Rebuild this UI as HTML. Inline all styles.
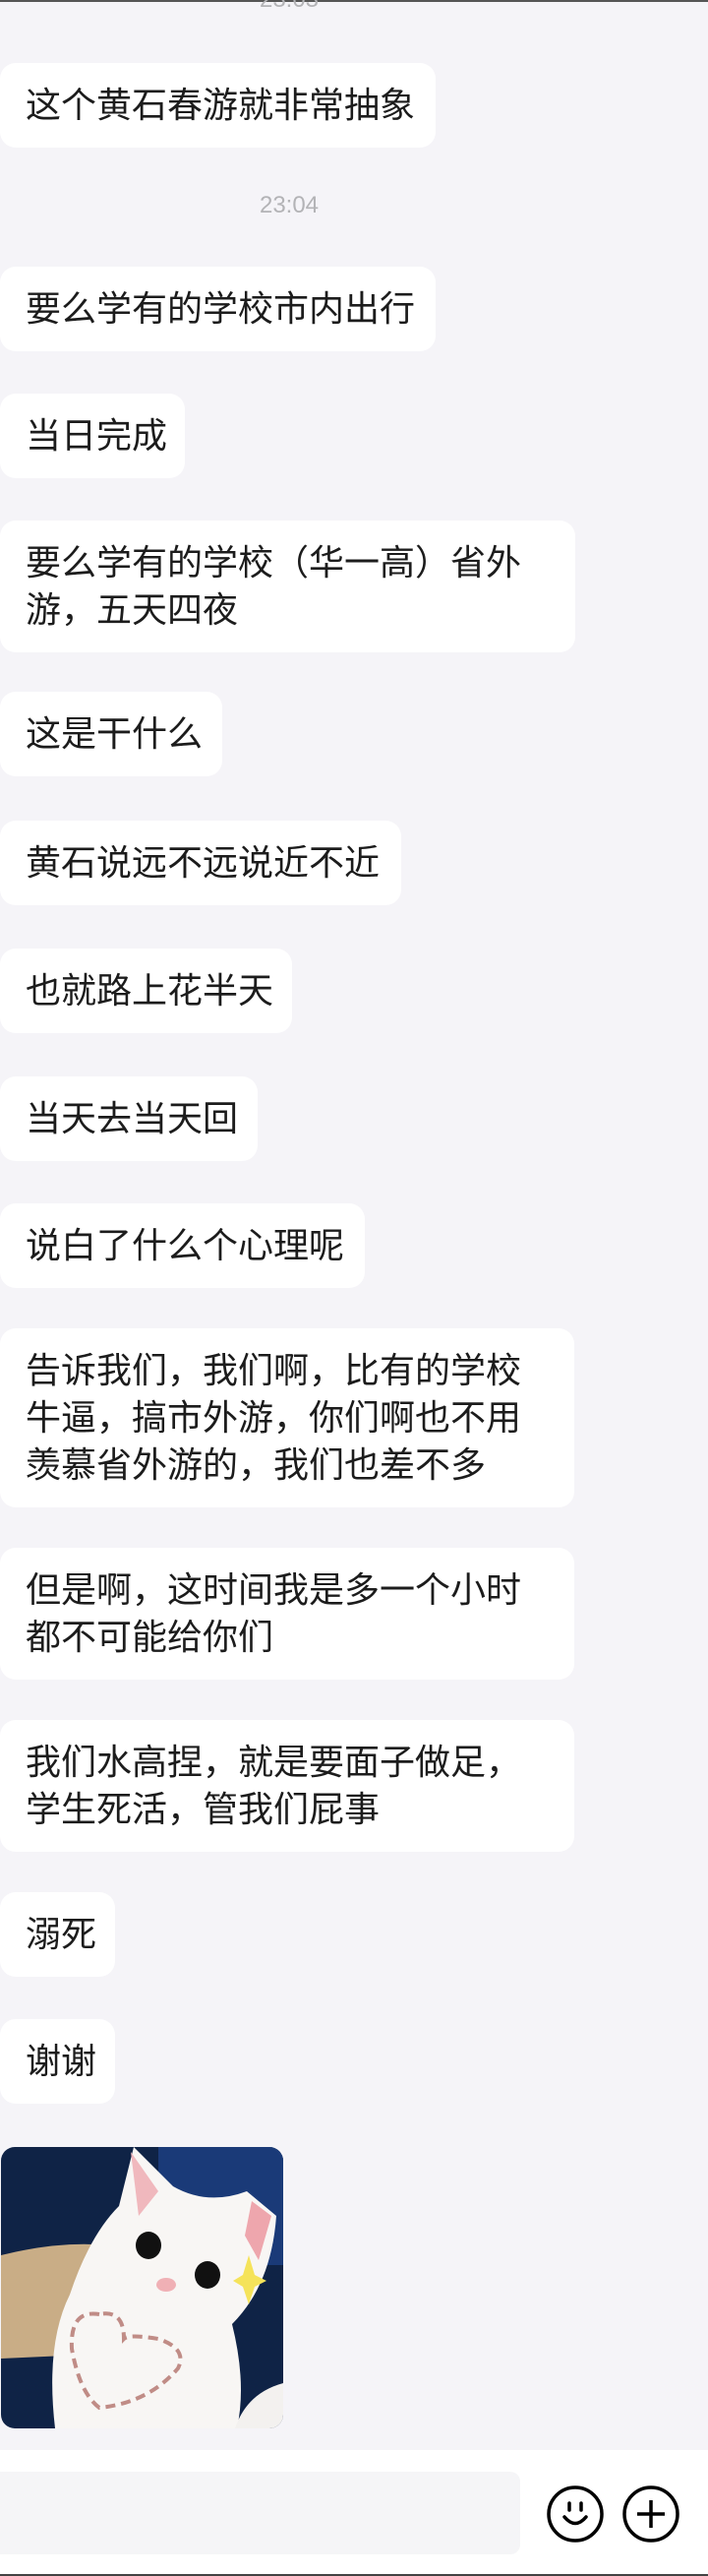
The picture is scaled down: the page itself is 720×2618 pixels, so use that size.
<!DOCTYPE html>
<html><head><meta charset="utf-8"><style>
*{margin:0;padding:0;box-sizing:border-box}
body{width:720px;height:2618px;background:#f5f4f8;position:relative;overflow:hidden;font-family:"Liberation Sans","Noto Sans CJK SC",sans-serif}
.b{position:absolute;left:0;background:#fff;border-radius:16px;color:#1c1c1c;font-size:36px;line-height:48px;padding:19px 22px 19px 26px;white-space:nowrap}
.t{position:absolute;left:0;width:588px;text-align:center;color:#b3b3b6;font-size:24px}
</style></head><body>
<div style="position:absolute;left:0;top:0;width:720px;height:2px;background:#555"></div>
<div class="t" style="top:-14px">23:03</div>
<div class="b" style="top:64px;width:443px">这个黄石春游就非常抽象</div>
<div class="t" style="top:195px">23:04</div>
<div class="b" style="top:271px;width:443px">要么学有的学校市内出行</div>
<div class="b" style="top:400px;width:188px">当日完成</div>
<div class="b" style="top:529px;width:585px">要么学有的学校（华一高）省外<br>游，五天四夜</div>
<div class="b" style="top:703px;width:226px">这是干什么</div>
<div class="b" style="top:834px;width:408px">黄石说远不远说近不近</div>
<div class="b" style="top:964px;width:297px">也就路上花半天</div>
<div class="b" style="top:1094px;width:262px">当天去当天回</div>
<div class="b" style="top:1223px;width:371px">说白了什么个心理呢</div>
<div class="b" style="top:1350px;width:584px">告诉我们，我们啊，比有的学校<br>牛逼，搞市外游，你们啊也不用<br>羡慕省外游的，我们也差不多</div>
<div class="b" style="top:1573px;width:584px">但是啊，这时间我是多一个小时<br>都不可能给你们</div>
<div class="b" style="top:1748px;width:584px">我们水高捏，就是要面子做足，<br>学生死活，管我们屁事</div>
<div class="b" style="top:1923px;width:117px">溺死</div>
<div class="b" style="top:2052px;width:117px">谢谢</div>
<svg style="position:absolute;left:1px;top:2182px" width="287" height="286" viewBox="0 0 287 286">
<defs><clipPath id="c"><rect width="287" height="286" rx="14"/></clipPath></defs>
<g clip-path="url(#c)">
<rect width="287" height="286" fill="#0f2346"/>
<rect x="160" y="0" width="127" height="120" fill="#1a3a78"/>
<path d="M0 110 Q60 95 110 100 L110 210 L0 215Z" fill="#c9ad86"/>
<path d="M55 286 Q45 200 70 150 Q90 90 120 60 L135 0 L175 40 Q210 60 250 45 L280 70 Q275 140 235 180 Q250 240 240 286Z" fill="#f8f6f4"/>
<path d="M238 286 Q250 250 287 240 L287 286Z" fill="#f3f1ef"/>
<path d="M132 5 L160 45 L140 70 Z" fill="#f0b8bd"/>
<path d="M255 55 L275 70 L262 115 L248 90Z" fill="#eea6ad"/>
<ellipse cx="150" cy="100" rx="13" ry="14" fill="#111"/>
<ellipse cx="210" cy="130" rx="13" ry="14" fill="#111"/>
<ellipse cx="168" cy="140" rx="10" ry="7" fill="#f0b0b5"/>
<path d="M252 110 L258 130 L270 136 L258 142 L252 160 L246 142 L236 136 L246 130Z" fill="#f5e35a"/>
<path d="M100 170 Q70 165 72 205 Q80 250 100 265 Q150 260 180 225 Q190 205 160 195 Q130 190 125 195 Q125 165 100 170Z" fill="none" stroke="#c08c86" stroke-width="4" stroke-dasharray="10 6"/>
</g></svg>
<div style="position:absolute;left:0;top:2490px;width:720px;height:126px;background:#fff"></div>
<div style="position:absolute;left:0;top:2512px;width:529px;height:84px;background:#f5f5f7;border-radius:0 10px 10px 0"></div>
<svg style="position:absolute;left:555px;top:2525px" width="60" height="60" viewBox="0 0 60 60"><circle cx="30" cy="30" r="27" fill="none" stroke="#000" stroke-width="3.5"/><path d="M24 19v7M36 19v7M19 33Q30 46 41 33" fill="none" stroke="#000" stroke-width="3.5" stroke-linecap="round"/></svg>
<svg style="position:absolute;left:632px;top:2525px" width="60" height="60" viewBox="0 0 60 60"><circle cx="30" cy="30" r="27" fill="none" stroke="#000" stroke-width="3.5"/><path d="M30 16v28M16 30h28" stroke="#000" stroke-width="3.5"/></svg>
<div style="position:absolute;left:0;top:2616px;width:720px;height:2px;background:#444"></div>
</body></html>
